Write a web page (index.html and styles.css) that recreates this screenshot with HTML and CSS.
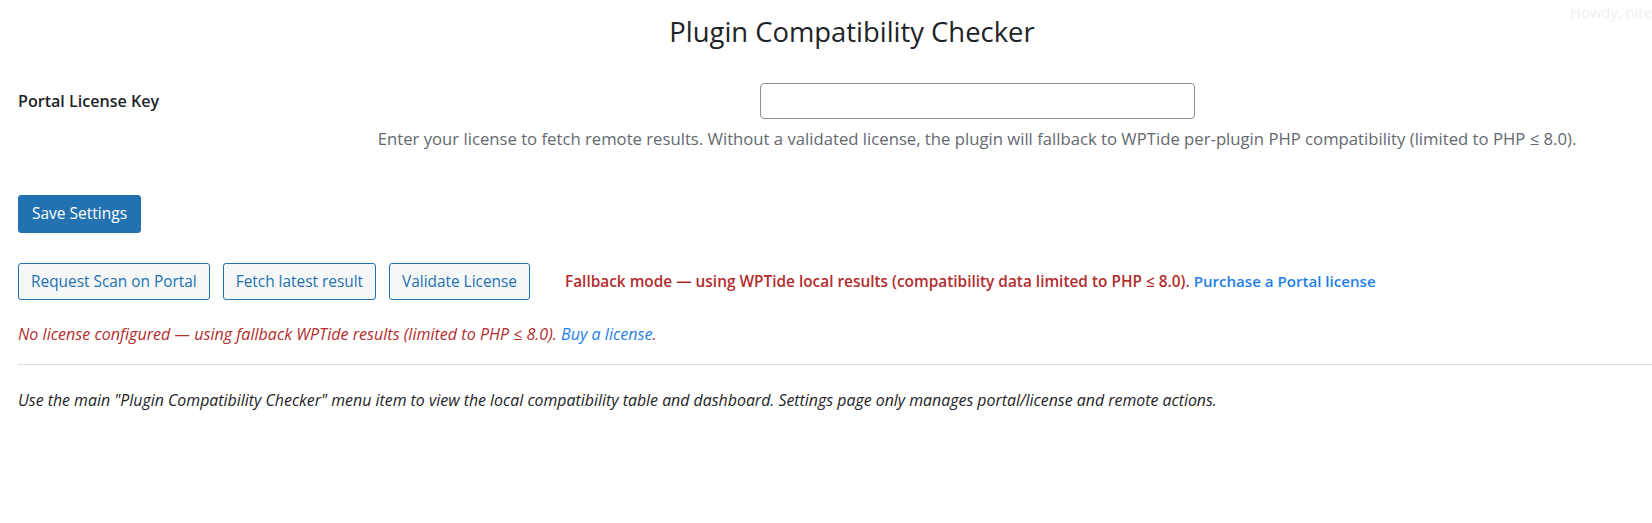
FILE: index.html
```html
<!DOCTYPE html>
<html lang="en">
<head>
<meta charset="utf-8">
<title>Plugin Compatibility Checker</title>
<link rel="stylesheet" href="styles.css">
</head>
<body>
<div class="howdy">Howdy, nite</div>
<div class="wrap">
  <h1 class="page-title">Plugin Compatibility Checker</h1>
  <form class="settings-form">
    <div class="form-row">
      <div class="form-label">Portal License Key</div>
      <div class="form-field">
        <input type="text" class="license-input" aria-label="Portal License Key">
        <p class="description">Enter your license to fetch remote results. Without a validated license, the plugin will fallback to WPTide per-plugin PHP compatibility (limited to PHP ≤ 8.0).</p>
      </div>
    </div>
    <div class="submit-row">
      <button type="button" class="button button-primary">Save Settings</button>
    </div>
  </form>
  <div class="actions-row">
    <button type="button" class="button button-secondary">Request Scan on Portal</button>
    <button type="button" class="button button-secondary">Fetch latest result</button>
    <button type="button" class="button button-secondary">Validate License</button>
    <span class="fallback-notice">Fallback mode — using WPTide local results (compatibility data limited to PHP ≤ 8.0). <a href="#" class="link">Purchase a Portal license</a></span>
  </div>
  <p class="license-notice">No license configured — using fallback WPTide results (limited to PHP ≤ 8.0). <a href="#" class="link">Buy a license</a>.</p>
  <hr class="divider">
  <p class="note">Use the main "Plugin Compatibility Checker" menu item to view the local compatibility table and dashboard. Settings page only manages portal/license and remote actions.</p>
</div>
</body>
</html>
```
FILE: styles.css
```css
html, body {
  margin: 0;
  padding: 0;
  background: #ffffff;
}
body {
  font-family: "Open Sans", "Noto Sans", sans-serif;
  color: #1d2327;
  font-size: 15px;
}
.howdy {
  position: absolute;
  top: 2px;
  left: 1570px;
  font-size: 14.8px;
  color: #f0f0f1;
  white-space: nowrap;
}
.wrap {
  padding: 0 20px 0 18px;
}
.page-title {
  margin: 0;
  padding: 15px 0 0 54px;
  text-align: center;
  font-size: 27.4px;
  font-weight: 400;
  line-height: 34px;
  color: #1d2327;
}
.form-row {
  display: grid;
  grid-template-columns: 304px 1fr;
  margin-top: 34px;
}
.form-label {
  font-weight: 600;
  font-size: 16.1px;
  line-height: 36px;
}
.form-field {
  text-align: center;
}
.license-input {
  display: block;
  margin: 0 auto;
  box-sizing: border-box;
  width: 435px;
  height: 36px;
  border: 1px solid #8c8f94;
  border-radius: 4px;
  background: #fff;
  font: inherit;
}
.description {
  margin: 9px 0 0;
  color: #646970;
  font-size: 16.7px;
  line-height: 22px;
}
.submit-row {
  margin-top: 45px;
}
.button {
  box-sizing: border-box;
  font-family: inherit;
  font-size: 15.4px;
  line-height: 1;
  border-radius: 3px;
  cursor: pointer;
  white-space: nowrap;
}
.button-primary {
  height: 38px;
  padding: 0 13px;
  font-size: 15.5px;
  background: #2271b1;
  border: 1px solid #2271b1;
  color: #fff;
}
.button-secondary {
  height: 37px;
  padding: 0 12px;
  background: #f6f7f7;
  border: 1px solid #2271b1;
  color: #2271b1;
}
.actions-row {
  display: flex;
  align-items: center;
  gap: 13px;
  margin-top: 30px;
}
.fallback-notice {
  margin-left: 22px;
  font-weight: 600;
  color: #b32d2e;
  font-size: 15.4px;
}
.fallback-notice .link {
  font-size: 15.1px;
}
.link {
  color: #1e7fe8;
  text-decoration: none;
}
.license-notice {
  margin: 23px 0 0;
  font-style: italic;
  color: #b32d2e;
  font-size: 16.1px;
  line-height: 22px;
}
.divider {
  margin: 19px -20px 0 0;
  border: 0;
  border-top: 1px solid #dcdcde;
}
.note {
  margin: 25px 0 0;
  font-style: italic;
  font-size: 15.9px;
  line-height: 20px;
}
```
